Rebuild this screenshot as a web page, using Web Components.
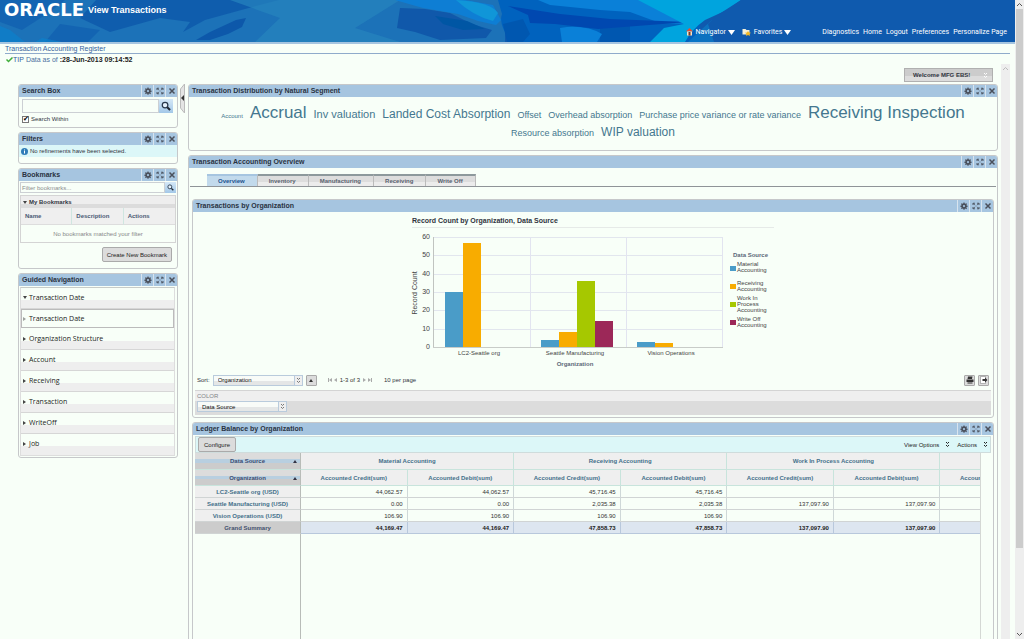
<!DOCTYPE html>
<html lang="en">
<head>
<meta charset="utf-8">
<title>View Transactions</title>
<style>
html,body{margin:0;height:100%}
body{background:#f8fff8;color:#303440;font:7px/8px "Liberation Sans",Arial,sans-serif;overflow:hidden}
</style>
</head>
<body>
<app-shell></app-shell>
<script>
const BASE = `*{box-sizing:border-box}
button,input,select{font:inherit;color:inherit;margin:0;padding:0;border:0;border-radius:0;background:none;outline:0}
a{color:inherit;text-decoration:none}svg{display:block}`;
function define(name, css, html) {
  customElements.define(name, class extends HTMLElement {
    constructor() {
      super();
      this.attachShadow({mode: 'open'});
    }
    connectedCallback() {
      if (this.shadowRoot.firstChild) return;
      this.shadowRoot.innerHTML = `<style>${BASE}${css}</style>` + (typeof html === 'function' ? html(this) : html);
    }
  });
}
const GEAR = `<svg width="8" height="8" viewBox="0 0 16 16" aria-hidden="true"><path fill="#4a505c" fill-rule="evenodd" d="M7 1h2l.5 2 1.3.6L12.700 2.500 14 4l-1.200 1.800.500 1.200 2 .400v2l-2 .500-.500 1.200L13.900 13l-1.400 1.300-1.800-1.100-1.200.500L9 15.500H7l-.500-1.900-1.200-.500L3.500 14.200 2.100 12.800l1.100-1.700-.500-1.200-2-.500v-2l2-.400.500-1.200L2 4l1.400-1.400 1.800 1.100L6.500 3zM8 6a2.200 2.200 0 1 0 0 4.400A2.200 2.200 0 0 0 8 6z"/></svg>`;
const EXPAND = `<svg width="8" height="8" viewBox="0 0 16 16" aria-hidden="true"><path fill="none" stroke="#4a505c" stroke-width="1.800" d="M2 6V2.500h4M2 2.500l4 4M14 6V2.500h-4M14 2.500l-4 4M2 10v3.500h4M2 13.500l4-4M14 10v3.500h-4M14 13.500l-4-4"/></svg>`;
const CLOSE = `<svg width="8" height="8" viewBox="0 0 16 16" aria-hidden="true"><path fill="none" stroke="#4a505c" stroke-width="3" d="M3 3l10 10M13 3L3 13"/></svg>`;
const LENS = s => `<svg width="${s}" height="${s}" viewBox="0 0 16 16" aria-hidden="true"><circle cx="6.500" cy="6.500" r="4.500" fill="#e4f1fb" stroke="#28384c" stroke-width="2"/><path d="M10 10l4.500 4.500" stroke="#1c2430" stroke-width="3.200"/></svg>`;
const CHEVS = `<svg width="5" height="7" viewBox="0 0 5 7" aria-hidden="true"><path fill="none" stroke="currentColor" d="M1 1l1.500 1.500L4 1M1 4l1.500 1.500L4 4"/></svg>`;

define('ui-panel', `
:host{display:block;border:1px solid #c6c8ca;border-radius:3px;min-width:0}
header{display:flex;height:12px;background:#a6c5e0;border-radius:2px 2px 0 0}
h2{flex:1;margin:0;padding-left:3px;font-size:7px;line-height:12px;color:#2a3342;white-space:nowrap}
button{width:12px;height:12px;display:grid;place-items:center;border-left:1px solid #d8e4ee;box-sizing:border-box}`,
el => `<header><h2>${el.getAttribute('heading')}</h2>
<button aria-label="Options">${GEAR}</button><button aria-label="Expand">${EXPAND}</button><button aria-label="Close">${CLOSE}</button></header><slot></slot>`);

define('drop-down', `
:host{display:inline-grid;height:11px;background:linear-gradient(#f8fbf8 60%,#e4e6e6 60%);border:1px solid #b9cbdc}
select{grid-area:1/1;appearance:none;width:100%;height:9px;padding:0 12px 0 4px;font-size:6px;line-height:8px;color:#111}
span{grid-area:1/1;justify-self:end;width:8px;border-left:1px solid #b9cbdc;background:#eee;display:grid;place-items:center;pointer-events:none;color:#777}`,
el => `<select aria-label="${el.getAttribute('label')}"><option>${el.getAttribute('value')}</option></select><span>${CHEVS}</span>`);

define('app-header', `
:host{display:grid;height:44px;border-bottom:2px solid #a6c5e0;box-shadow:inset 0 -1px #7fa8d4;background:#0f5aae;color:#fff;overflow:hidden}
.art,.bar{grid-area:1/1}
.art{width:100%;height:42px}
.bar{display:flex;justify-content:space-between;position:relative}
h1{display:flex;margin:0;padding:0 0 0 4px;height:20px;align-items:center;font-size:9px;line-height:20px;white-space:nowrap}
b{font:bold 18px/20px "DejaVu Sans",sans-serif}
h1 span{padding-left:4px}
nav{display:flex;align-items:center;align-self:end;height:20px;padding-right:8px;white-space:nowrap;font-family:Roboto,sans-serif}
nav a{margin-left:4px}
nav .menu{display:flex;align-items:center;gap:3px;margin:0 7px 0 0;white-space:nowrap}
nav .menu svg:last-child{margin-left:-1px}
.menu+.menu{margin-right:27px!important}`,
`<svg class="art" viewBox="0 0 1015 42" preserveAspectRatio="none" aria-hidden="true">
<rect width="1015" height="42" fill="#0f5aae"/><path fill="#1c72b8" d="M0 0H505V42H0z"/>
<path fill="#1160b0" d="M0 0H65L50 12 22 30 0 22zM60 24L100 30 88 42H45z" opacity=".8"/>
<path fill="#0d58aa" d="M96 0h183L245 9 205 20 183 32 190 22 160 18 110 32 80 18z" opacity=".8"/>
<path fill="#0d58aa" d="M236 20l10-2-4 9-14 7-18 6h-14l14-8z"/>
<path fill="#0c80cc" d="M0 26l10 4 15 12H0zM42 38l20 4H35z" opacity=".7"/>
<path fill="#2685be" d="M230 0h170L355 28 400 42H255L280 18z" opacity=".7"/>
<path fill="#1058aa" d="M400 8L425 9 450 13 472 24 492 30 486 38 440 40 415 32 397 28z"/>
<path fill="#0056a4" d="M435 16l32 5 18 8-22 1-20-6z"/>
<path fill="#0e7ed4" d="M395 0h70l28 5 8 15-5 5-18-4-20-7-35-6z"/>
<path fill="#1096d8" d="M456 0q35 2 42 13l-5 8q-20-5-37-21z"/>
<path fill="#0062be" d="M498 0H700V42H512Q498 25 502 14z"/>
<path fill="#0057b0" d="M503 24l20-5 7 15-7 8h-16zM600 28l30-4v18h-30z"/>
<path fill="#0a80d8" d="M538 0H650L690 24 660 23 630 12 600 10 550 5zM560 28q25-4 42 6l-5 8h-35z"/>
<path fill="#0048b0" d="M508 6l52 8 50 5 78 3-90 7-43-5-25-1-2-8z"/>
<path fill="#00a4de" d="M638 0h103l-14 10-22 10q-13 9-20 22h-35l14-14 20-4z"/>
<path fill="#0b82cc" d="M712 20l-10 9-14 13h40l16-20z" opacity=".6"/>
<path fill="#0f5aae" d="M741 0l-25 16-8 8 6 18h40V0z"/>
</svg>
<div class="bar"><h1><b>ORACLE</b><span>View Transactions</span></h1>
<nav><a class="menu" href="#"><svg width="7" height="8" viewBox="0 0 14 16"><path fill="#e84c30" d="M7 0l7 7H0z"/><path fill="#f4e3c8" d="M2 7h10v8H2z"/><path fill="#7a3820" d="M5 8h4v7H5z"/></svg>Navigator<svg width="7" height="5" viewBox="0 0 7 5"><path fill="#fff" d="M0 0h7L3.500 5z"/></svg></a>
<a class="menu" href="#"><svg width="9" height="8" viewBox="0 0 18 16"><path fill="#f4f0d8" d="M1 2h6l2 2h6v9H1z"/><path fill="#f4b820" d="M12 6l2 3 4 .5-3 2.500 1 4-4-2-4 2 1-4-3-2.500 4-.5z"/></svg>Favorites<svg width="7" height="5" viewBox="0 0 7 5"><path fill="#fff" d="M0 0h7L3.500 5z"/></svg></a>
<a href="#">Diagnostics</a><a href="#">Home</a><a href="#">Logout</a><a href="#">Preferences</a><a href="#">Personalize Page</a></nav></div>`);

define('register-info', `
:host{display:block;margin:0 5px;height:20px;color:#4a6fa0}
p{margin:0;height:10px;line-height:10px;border-bottom:1px solid #8fabcb;color:#35619c}
div{display:flex;align-items:center;height:11px}
b{color:#222}i{font-style:normal;color:#35619c;padding-right:2px}`,
`<p>Transaction Accounting Register</p><div><svg width="8" height="6" viewBox="0 0 16 12" aria-hidden="true"><path d="M3 5l4 4 8-8" fill="none" stroke="#3fae3a" stroke-width="3"/></svg><i>TIP</i>Data as of&nbsp;<b>:28-Jun-2013 09:14:52</b></div>`);

define('search-box', `
:host{display:block;padding:2px 4px 3px 3px;height:30px}
form{display:flex;height:14px}
input[type=search]{flex:1;min-width:0;border:1px solid #ccd0d4;appearance:none}
button{width:14px;background:linear-gradient(#d5e8f7,#a3c8e8);display:grid;place-items:center}
label{display:flex;align-items:center;gap:2px;height:12px;font-size:6px}
input[type=checkbox]{appearance:none;width:7px;height:7px;border:1px solid #777;background:#fff;display:grid;place-items:center}
input[type=checkbox]::before{content:"✔";font:7px/5px "DejaVu Sans";color:#000}`,
`<form><input type="search" aria-label="Search"><button type="button" aria-label="Go">${LENS(10)}</button></form><label><input type="checkbox" checked>Search Within</label>`);

define('filter-state', `
:host{display:block;height:18px}
p{display:flex;align-items:center;gap:2px;margin:0;padding-left:2px;height:12px;background:#dcf7f8;font-size:6px}`,
`<p><svg width="7" height="7" viewBox="0 0 14 14" aria-hidden="true"><circle cx="7" cy="7" r="7" fill="#2f7db8"/><path d="M6 6h2v5H6zM6 3h2v2H6z" fill="#fff"/></svg>No refinements have been selected.</p>`);

define('bookmark-list', `
:host{display:block;padding:1px 1px 6px;font-size:6px}
.find{display:flex;height:11px}
.find input{flex:1;min-width:0;border:1px solid #ccd0d4;padding-left:1px}
.find input::placeholder{color:#8a8e90;opacity:1}
.find button{width:11px;background:linear-gradient(#d5e8f7,#a3c8e8);display:grid;place-items:center}
.box{margin-top:2px;border:1px solid #d4d4d4}
h3{display:flex;align-items:center;gap:2px;margin:0;padding-left:2px;height:12px;font-size:6px;background:linear-gradient(#eee 70%,#dcdcdc 70%)}
table{width:100%;border-spacing:0;table-layout:fixed}
th{height:17px;padding:0 0 0 4px;text-align:left;background:#efefef;color:#4a5a74;border-right:1px solid #cfe6e0;border-bottom:1px solid #ddd}
th:last-child{border-right:0}
td{height:17px;padding:0;text-align:center;color:#888}
.new{display:block;margin:4px 4px 0 auto;height:15px;padding:0 4px;background:#dcdcdc;border:1px solid #aaa;border-radius:2px;color:#222}`,
`<div class="find"><input aria-label="Filter bookmarks" placeholder="Filter bookmarks..."><button aria-label="Find">${LENS(7)}</button></div>
<div class="box"><h3><svg width="4" height="3"><path fill="#444" d="M0 0h4L2 3z"/></svg>My Bookmarks</h3>
<table><tr><th>Name</th><th>Description</th><th>Actions</th></tr><tr><td colspan="3">No bookmarks matched your filter</td></tr></table></div>
<button class="new">Create New Bookmark</button>`);

define('guided-nav', `
:host{display:block;padding:1px 2px 1px 1px}
ul{margin:0;padding:0;list-style:none;border:1px solid #ddd;border-top-color:#c8ccc8}
li{height:21px;border-bottom:1px solid #d6d6d6;background:linear-gradient(#f8fff8 12px,#eee 12px)}
li.sub{height:19px;background:none;border:1px solid #bbb;margin:0 0 1px}
li:last-child{border-bottom:0}
a{display:flex;align-items:center;gap:2px;height:19px;padding-left:2px;font:7px/19px "Open Sans",sans-serif;color:#222}
.sub a{height:17px;padding-left:1px}.sub svg{opacity:.5}`,
() => {
  const right = '<svg width="4" height="4"><path fill="#444" d="M0 0v4l3-2z"/></svg>';
  const down = '<svg width="4" height="4"><path fill="#444" d="M0 0h4L2 3z"/></svg>';
  const row = (t, i = right, c = '') => `<li class="${c}"><a href="#">${i}${t}</a></li>`;
  return `<ul>${row('Transaction Date', down)}${row('Transaction Date', right, 'sub')}${['Organization Structure', 'Account', 'Receiving', 'Transaction', 'WriteOff', 'Job'].map(t => row(t)).join('')}</ul>`;
});

define('tag-cloud', `
:host{display:flex;flex-wrap:wrap;justify-content:center;align-content:start;align-items:baseline;column-gap:7px;height:53px;padding:8px 24px 0;color:#44778f;white-space:nowrap}
a{line-height:16px}.s1{font-size:6px}.s2{font-size:9px}.s3{font-size:11px}.s4{font-size:12px}.s5{font-size:17px}`,
[['Account', 1], ['Accrual', 5], ['Inv valuation', 3], ['Landed Cost Absorption', 4], ['Offset', 2], ['Overhead absorption', 2], ['Purchase price variance or rate variance', 2], ['Receiving Inspection', 5], ['Resource absorption', 2], ['WIP valuation', 4]]
  .map(([t, s]) => `<a href="#" class="s${s}">${t}</a>`).join(''));

define('tab-strip', `
:host{display:flex;height:19px;margin:0 1px;padding:6px 0 0 17px;border-bottom:1px solid #8f9498}
button{height:12px;padding:0 12px 0 11px;font-weight:bold;font-size:6px;line-height:10px;color:#5a6370;background:linear-gradient(#ddd 60%,#ececec 60%);border-top:2px solid #8d999c;border-right:1px solid #bbb}
button.on{background:#c2daec;color:#1c5290;border-top-color:#a6c5e0}`,
['Overview', 'Inventory', 'Manufacturing', 'Receiving', 'Write Off'].map((t, i) => `<button${i ? '' : ' class="on"'}>${t}</button>`).join(''));

define('bar-chart', `
:host{display:flex;justify-content:center;height:161px;padding-top:1px}
svg{overflow:visible}
text{font-size:6px;fill:#444}.m{text-anchor:middle}.e{text-anchor:end;font-size:7px}.b{font-weight:bold;fill:#5c6878}.h{font-size:7px;font-weight:bold;fill:#303440}.v{font-size:7px}`,
() => {
  const colors = ['#4a9cc8', '#f8ac00', '#a6c800', '#9c2858'];
  const groups = [[30, 57], [4, 8, 36, 14], [3, 2]];
  const y = v => 134 - v * 11 / 6;
  let s = '';
  for (let v = 0; v <= 60; v += 10) {
    s += `<path d="M21 ${Math.round(y(v)) + .5}H311" stroke="${v ? '#e2e6ee' : '#c8ccc8'}"/><text class="e" x="18" y="${Math.round(y(v)) + 2}">${v}</text>`;
  }
  [118, 214, 310].forEach(x => s += `<path d="M${x}.5 24V134" stroke="#e2e4f0"/>`);
  s += '<path d="M21.500 24V134" stroke="#c0c4c0"/>';
  groups.forEach((g, i) => g.forEach((v, j) => {
    s += `<rect x="${33 + i * 96 + j * 18}" y="${Math.round(y(v))}" width="18" height="${134 - Math.round(y(v))}" fill="${colors[j]}"/>`;
  }));
  ['LC2-Seattle org', 'Seattle Manufacturing', 'Vision Operations'].forEach((t, i) => s += `<text class="m" x="${67 + i * 96}" y="142">${t}</text>`);
  const legend = [['Material', 'Accounting'], ['Receiving', 'Accounting'], ['Work In', 'Process', 'Accounting'], ['Write Off', 'Accounting']];
  const top = [54, 73, 88, 109];
  legend.forEach((l, i) => {
    s += `<rect x="318" y="${53 + i * 18}" width="6" height="5" fill="${colors[i]}"/>`;
    l.forEach((t, j) => s += `<text x="325" y="${top[i] + j * 6 - 1}">${t}</text>`);
  });
  return `<svg width="362" height="160" role="img" aria-label="Record Count by Organization, Data Source">
<text class="h" x="0" y="10">Record Count by Organization, Data Source</text><path d="M0 14.500H362" stroke="#e6eae8"/>${s}
<text class="b m" x="163" y="153">Organization</text><text class="v m" transform="translate(5 80) rotate(-90)">Record Count</text><text class="b" x="321" y="44">Data Source</text></svg>`;
});

define('chart-controls', `
:host{display:block;font-size:6px}
.row{display:flex;align-items:center;height:17px;padding:0 4px 3px;gap:3px}
.row drop-down{width:90px}
.sq{width:11px;height:11px;display:grid;place-items:center;border:1px solid #aaa;background:#dcdcdc;border-radius:1px}
.pg{display:flex;align-items:center;gap:2px;margin:0 8px 0 7px;color:#333}
.pg svg{color:#aaa}.fill{flex:1}
.band{margin:0 2px 2px;height:25px;padding:1px 3px 0 2px;border-top:1px solid #d4d4d4;background:linear-gradient(#efefef 10px,#dcdcdc 10px)}
.band label{display:block;line-height:9px;color:#808488}
.band drop-down{width:90px;display:grid}`,
`<div class="row"><span>Sort:</span><drop-down label="Sort" value="Organization"></drop-down><button class="sq" aria-label="Ascending"><svg width="4" height="3"><path fill="#333" d="M0 3h4L2 0z"/></svg></button>
<span class="pg"><svg width="11" height="4"><path fill="currentColor" d="M1 0h1v4H1zM5 0v4L2 2zM10 0v4L7 2z"/></svg><span>1-3 of 3</span><svg width="11" height="4"><path fill="currentColor" d="M1 0v4l3-2zM6 0v4l3-2zM9 0h1v4H9z"/></svg></span><span>10 per page</span><span class="fill"></span>
<button class="sq" aria-label="Print"><svg width="8" height="8" viewBox="0 0 16 16"><path fill="#333" d="M4 1h9l-1 5H3zM1 7h14v5H1zM3 13h10v2H3z"/></svg></button><button class="sq" aria-label="Export"><svg width="8" height="8" viewBox="0 0 16 16"><path fill="#fff" stroke="#777" d="M1 1h10v14H1z"/><path fill="#333" d="M5 6h5V3l5 5-5 5v-3H5z"/></svg></button></div>
<div class="band"><label>COLOR</label><drop-down label="Color" value="Data Source"></drop-down></div>`);

define('pivot-table', `
:host{display:block;font-size:6px;padding:1px 2px 0}
.tools{display:flex;align-items:center;height:17px;padding:0 2px;border:1px solid #cfdcdc;background:#dcf7f8}
.tools button{display:flex;align-items:center;gap:6px;margin-left:7px;color:#222;font-size:6px}
.tools .cfg{height:15px;padding:0 5px;margin:0 auto 0 0;border:1px solid #aaa;background:#dcdcdc;border-radius:2px}
.view{margin-right:10px;border-right:1px solid #d4d8d4;overflow:hidden;height:220px}
.grid{display:grid;grid-template-columns:106px 1fr;width:894px;height:100%}
table{grid-area:1/1/2/3;border-spacing:0;table-layout:fixed;width:852px;align-self:start}
.rail{grid-area:1/1;border-right:1px solid #b8bcb8}
th,td{height:12px;padding:0;line-height:8px;border-right:1px solid #cfd8d8;border-bottom:1px solid #d0d4d4;overflow:hidden;white-space:nowrap}
th{background:#efefef;color:#44708a;text-align:center}
td{text-align:right;padding-right:4px;color:#333}
thead th{height:16px;border-right-color:#c8e4dc;border-bottom-color:#c8e4dc}
thead tr:first-child th{height:17px}
tr th:first-child{border-right-color:#b8bcb8}
thead th:first-child{background:linear-gradient(#dcdcdc 40%,#b8cfe0 40% 60%,#ccc 60%);color:#3c4c70}
thead th svg{float:right;margin:3px 3px 0 -7px}
tfoot th{background:#ccc;color:#44506c}tfoot td{background:#dde6f0;font-weight:bold;border-color:#b8c8dc;color:#222}`,
() => {
  const up = '<svg width="4" height="3"><path fill="#334" d="M0 3h4L2 0z"/></svg>';
  const cells = a => a.map(v => `<td>${v}</td>`).join('');
  const row = (n, a) => `<tr><th scope="row">${n}</th>${cells(a)}</tr>`;
  const CR = 'Accounted Credit(sum)', DB = 'Accounted Debit(sum)';
  return `<div class="tools"><button class="cfg">Configure</button><button>View Options ${CHEVS}</button><button>Actions ${CHEVS}</button></div>
<div class="view"><div class="grid"><div class="rail"></div><table><colgroup><col style="width:106px"><col><col><col><col><col><col><col></colgroup><thead>
<tr><th>${up}Data Source</th><th colspan="2">Material Accounting</th><th colspan="2">Receiving Accounting</th><th colspan="2">Work In Process Accounting</th><th></th></tr>
<tr><th>${up}Organization</th>${[CR, DB, CR, DB, CR, DB, CR].map(t => `<th>${t}</th>`).join('')}</tr></thead><tbody>
${row('LC2-Seattle org (USD)', ['44,062.57', '44,062.57', '45,716.45', '45,716.45', '', '', ''])}
${row('Seattle Manufacturing (USD)', ['0.00', '0.00', '2,035.38', '2,035.38', '137,097.90', '137,097.90', ''])}
${row('Vision Operations (USD)', ['106.90', '106.90', '106.90', '106.90', '', '', ''])}</tbody>
<tfoot>${row('Grand Summary', ['44,169.47', '44,169.47', '47,858.73', '47,858.73', '137,097.90', '137,097.90', ''])}</tfoot></table></div></div>`;
});

define('scroll-rail', `
:host{display:flex;flex-direction:column;align-items:center;background:#eee;color:#bbb}
:host([thumb]){color:#555}
i{width:7px;flex:540;background:#ccc}s{flex:82}svg{flex:none;margin:2px 0}
:host(:not([thumb])) i,:host(:not([thumb])) svg:last-child{visibility:hidden}`,
`<svg width="5" height="5"><path fill="none" stroke="currentColor" d="M0 4l2.500-2.500L5 4"/></svg><i></i><s></s><svg width="5" height="5"><path fill="none" stroke="currentColor" d="M0 1l2.500 2.500L5 1"/></svg>`);

define('app-shell', `
:host{display:grid;grid-template-columns:1fr 9px;height:100vh}
.page{display:flex;flex-direction:column;min-height:0;min-width:0}
.body{display:grid;grid-template-columns:160px 10px minmax(0,1fr) 9px;margin:0 5px 0 18px;flex:1;min-height:0;overflow:hidden}
.left{display:flex;flex-direction:column;gap:4px;padding-top:20px}
.handle{margin-top:20px;padding-left:2px}
.right{display:flex;flex-direction:column;gap:4px;margin-right:3px;min-height:0;padding-top:4px}
.welcome{display:flex;justify-content:space-between;align-items:center;align-self:flex-end;width:89px;height:14px;flex:none;margin:0 5px -2px 0;padding:0 4px 0 8px;border:1px solid #b0b0b0;background:linear-gradient(#ccc 60%,#dcdcdc 60%);font-weight:bold;font-size:6px;white-space:nowrap}
.welcome svg{color:#fff}
.over{flex:1 0 auto}
.stack{display:flex;flex-direction:column;gap:4px;margin:12px 3px 0}`,
`<div class="page"><app-header></app-header><register-info></register-info>
<div class="body"><div class="left">
<ui-panel heading="Search Box"><search-box></search-box></ui-panel>
<ui-panel heading="Filters"><filter-state></filter-state></ui-panel>
<ui-panel heading="Bookmarks"><bookmark-list></bookmark-list></ui-panel>
<ui-panel heading="Guided Navigation"><guided-nav></guided-nav></ui-panel></div>
<div class="handle"><svg width="5" height="30"><path d="M4.500 0L.5 5v19l4 5z" fill="#e4e4e4" stroke="#bbb"/><path fill="#333" d="M4 11v6l-3-3z"/></svg></div>
<div class="right"><button class="welcome">Welcome MFG EBS!${CHEVS}</button>
<ui-panel heading="Transaction Distribution by Natural Segment"><tag-cloud></tag-cloud></ui-panel>
<ui-panel class="over" heading="Transaction Accounting Overview"><tab-strip></tab-strip><div class="stack">
<ui-panel heading="Transactions by Organization"><bar-chart></bar-chart><chart-controls></chart-controls></ui-panel>
<ui-panel heading="Ledger Balance by Organization"><pivot-table></pivot-table></ui-panel></div></ui-panel></div>
<scroll-rail></scroll-rail></div></div><scroll-rail thumb></scroll-rail>`);
</script>
</body>
</html>
